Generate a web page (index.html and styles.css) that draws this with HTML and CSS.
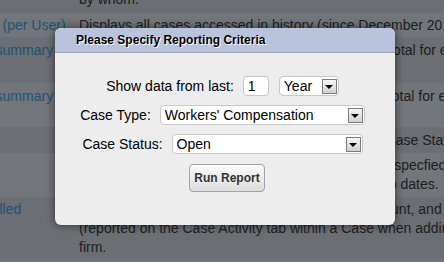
FILE: index.html
```html
<!DOCTYPE html>
<html>
<head>
<meta charset="utf-8">
<link rel="stylesheet" href="styles.css">
</head>
<body>
<div class="page">
  <div class="row dark h46"><span class="c1"></span><span class="c2">Displays the history of each case, showing who changed it and when it was changed, and<br>by whom.</span></div>
  <div class="row light h24 pt3"><span class="c1"><a class="link">Cases (per User)</a></span><span class="c2">Displays all cases accessed in history (since December 2011) and by whom.</span></div>
  <div class="row dark h46"><span class="c1"><a class="link">Case summary</a></span><span class="c2">Displays a summary of cases in Case Type and a total for each Case Type in<br>the firm.</span></div>
  <div class="row light h44"><span class="c1"><a class="link">Case summary</a></span><span class="c2">Displays a summary of cases in Case Area and a total for each Case Area in<br>the firm.</span></div>
  <div class="row dark h26"><span class="c1"></span><span class="c2">Displays a number of open and closed cases per Case Status.</span></div>
  <div class="row light h44 pt3"><span class="c1"></span><span class="c2">Displays all cases opened or closed during the set specfied start and end<br>and the cases that remained open between the two dates.</span></div>
  <div class="row dark h62 pt3"><span class="c1"><a class="link">Fee Billed</a></span><span class="c2">Displays all the total hours billed and the total amount, and the rate billed<br>(reported on the Case Activity tab within a Case when adding time for the<br>firm.</span></div>
  <div class="row light h40"><span class="c1"></span><span class="c2"></span></div>
</div>

<div class="dialog">
  <div class="dialog-title">Please Specify Reporting Criteria</div>
  <div class="dialog-body">
    <div class="field">
      <label>Show data from last:</label>
      <input class="input" type="text" value="1">
      <div class="select w-year"><select><option>Year</option></select><span class="arrow"></span></div>
    </div>
    <div class="field">
      <label>Case Type:</label>
      <div class="select w-type"><select><option>Workers' Compensation</option></select><span class="arrow"></span></div>
    </div>
    <div class="field">
      <label>Case Status:</label>
      <div class="select w-status"><select><option>Open</option></select><span class="arrow"></span></div>
    </div>
    <button class="run">Run Report</button>
  </div>
</div>
</body>
</html>
```
FILE: styles.css
```css
html, body {
  margin: 0;
  padding: 0;
}
body {
  width: 444px;
  height: 262px;
  overflow: hidden;
  background: #6e7175;
  font-family: "Liberation Sans", Arial, sans-serif;
  position: relative;
}
.page {
  margin-top: -33px;
  margin-left: -41px;
  width: 760px;
}
.row {
  display: grid;
  grid-template-columns: 120px 1fr;
  box-sizing: border-box;
  padding-top: 4px;
  font-size: 14px;
  line-height: 19px;
  color: #1c1e22;
  white-space: nowrap;
}
.row.pt3 { padding-top: 3px; }
.dark { background: #6b6e72; }
.light { background: #727579; }
.h24 { height: 24px; }
.h26 { height: 26px; }
.h40 { height: 40px; }
.h44 { height: 44px; }
.h46 { height: 46px; }
.h62 { height: 62px; }
.link {
  color: #1c5477;
}

.dialog {
  position: absolute;
  left: 55px;
  top: 28px;
  width: 340px;
  height: 197px;
  border-radius: 6px;
  background: #ededed;
  box-shadow: 0 0 8px rgba(0, 0, 0, 0.55);
  overflow: hidden;
}
.dialog-title {
  height: 24px;
  line-height: 24px;
  background: #b9c4dc;
  border-bottom: 1px solid #97a4bf;
  padding-left: 21px;
  font-size: 12px;
  font-weight: bold;
  color: #000;
  text-shadow: 1px 1px 0 #fff;
}
.dialog-body {
  display: flex;
  flex-direction: column;
  align-items: center;
  gap: 9px;
  padding: 23px 5px 0 0;
  font-size: 14px;
  color: #000;
}
.field {
  display: flex;
  align-items: center;
  gap: 9px;
  height: 20px;
}
.input {
  box-sizing: border-box;
  width: 26px;
  height: 20px;
  margin: 0 1px 0 0;
  padding: 0 4px;
  border: 1px solid #c8c8c8;
  border-radius: 4px;
  background: #fff;
  font: 14px "Liberation Sans", Arial, sans-serif;
  color: #000;
  outline: none;
}
.select {
  display: flex;
  align-items: center;
  box-sizing: border-box;
  height: 20px;
  border: 1px solid #c8c8c8;
  border-radius: 4px;
  background: #fff;
  padding-right: 1px;
}
.select select {
  appearance: none;
  -webkit-appearance: none;
  flex: 1;
  min-width: 0;
  height: 18px;
  border: 0;
  margin: 0;
  padding: 0 0 0 4px;
  background: transparent;
  font: 14px "Liberation Sans", Arial, sans-serif;
  color: #000;
  outline: none;
}
.w-year { width: 60px; }
.w-type { width: 205px; }
.w-status { width: 191px; }
.arrow {
  box-sizing: border-box;
  width: 15px;
  height: 15px;
  flex: none;
  border: 1px solid #7c7c7c;
  background: linear-gradient(#f6f6f6, #d0d0d0);
  display: flex;
  align-items: center;
  justify-content: center;
}
.arrow::after {
  content: "";
  width: 0;
  height: 0;
  border-left: 4px solid transparent;
  border-right: 4px solid transparent;
  border-top: 4px solid #000;
  margin-top: 1px;
}
.run {
  box-sizing: border-box;
  width: 76px;
  height: 28px;
  margin: 1px 0 0 9px;
  padding: 0;
  border: 1px solid #a3a3a3;
  border-radius: 4px;
  background: linear-gradient(#fbfbfb, #dcdcdc);
  font: bold 12px "Liberation Sans", Arial, sans-serif;
  color: #333;
}
```
